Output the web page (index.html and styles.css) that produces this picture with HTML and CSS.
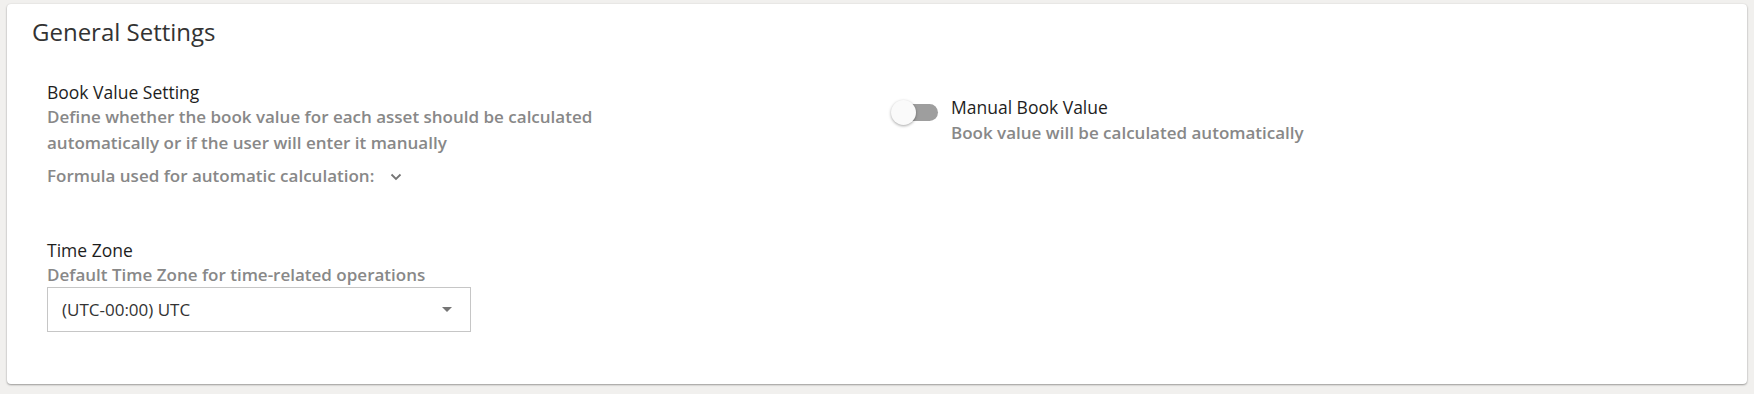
FILE: index.html
```html
<!DOCTYPE html>
<html lang="en">
<head>
    <meta charset="UTF-8">
    <title>General Settings</title>
    <link rel="stylesheet" href="styles.css">
</head>
<body>
    <div class="page">
        <div class="card">
            <h2 class="card-title">General Settings</h2>

            <div class="settings">
                <div class="setting">
                    <div class="label">Book Value Setting</div>
                    <div class="desc book-desc">Define whether the book value for each asset should be calculated automatically or if the user will enter it manually</div>
                    <div class="desc formula">
                        Formula used for automatic calculation:
                        <svg class="chevron" width="12" height="8" viewBox="0 0 12 8">
                            <polyline points="1.5,1.5 6,6 10.5,1.5" fill="none" stroke="#757575" stroke-width="1.8"/>
                        </svg>
                    </div>
                </div>

                <div class="setting toggle-setting">
                    <div class="toggle">
                        <div class="toggle-track"></div>
                        <div class="toggle-knob"></div>
                    </div>
                    <div>
                        <div class="label">Manual Book Value</div>
                        <div class="desc toggle-desc">Book value will be calculated automatically</div>
                    </div>
                </div>

                <div class="setting timezone">
                    <div class="label">Time Zone</div>
                    <div class="desc">Default Time Zone for time-related operations</div>
                    <div class="select">
                        <span>(UTC-00:00) UTC</span>
                        <span class="select-arrow"></span>
                    </div>
                </div>
            </div>
        </div>
    </div>
</body>
</html>
```

FILE: styles.css
```css
body {
    margin: 0;
    background-color: #f1f0ee;
    font-family: "Open Sans", "Liberation Sans", sans-serif;
}
.page {
    padding: 4px 7px 10px 7px;
}
.card {
    background: #fff;
    border-radius: 4px;
    box-shadow: 0 1px 2px rgba(0,0,0,0.35), 0 0 2px rgba(0,0,0,0.08);
    height: 380px;
    box-sizing: border-box;
    padding-top: 11px;
}
.card-title {
    margin: 0;
    padding: 0 24px 0 25px;
    font-size: 24px;
    font-weight: 400;
    color: #333;
    line-height: normal;
}
.settings {
    display: grid;
    grid-template-columns: 1fr 1fr;
    column-gap: 24px;
    padding: 32px 40px 0 40px;
}
.label {
    font-size: 17.5px;
    line-height: 24px;
    font-weight: 500;
    color: #1e1e1e;
}
.desc {
    font-size: 17px;
    line-height: 26px;
    font-weight: 600;
    color: #888;
}
.book-desc {
    max-width: 600px;
}
.formula {
    margin-top: 7px;
    display: flex;
    align-items: center;
    gap: 16px;
}
.chevron {
    display: block;
    margin-top: 1px;
}
.toggle-setting {
    display: flex;
    align-items: flex-start;
    gap: 13px;
    padding-top: 15px;
}
.toggle {
    position: relative;
    width: 47px;
    height: 25px;
    margin-top: 5px;
    margin-left: 2px;
    flex-shrink: 0;
}
.toggle-track {
    position: absolute;
    left: 2px;
    top: 4px;
    width: 45px;
    height: 17px;
    border-radius: 9px;
    background: #9e9e9e;
}
.toggle-knob {
    position: absolute;
    left: 0;
    top: 0;
    width: 25px;
    height: 25px;
    border-radius: 50%;
    background: #fafafa;
    box-shadow: 0 1px 3px rgba(0,0,0,0.35);
}
.toggle-desc {
    margin-top: 1px;
}
.timezone {
    margin-top: 49px;
}
.select {
    width: 424px;
    height: 45px;
    box-sizing: border-box;
    margin-top: -1px;
    border: 1px solid #c6c6c6;
    display: flex;
    align-items: center;
    justify-content: space-between;
    padding: 0 18px 0 14px;
    font-size: 17px;
    color: #333;
}
.select-arrow {
    width: 0;
    height: 0;
    border-left: 5.5px solid transparent;
    border-right: 5.5px solid transparent;
    border-top: 5px solid #757575;
}
```
